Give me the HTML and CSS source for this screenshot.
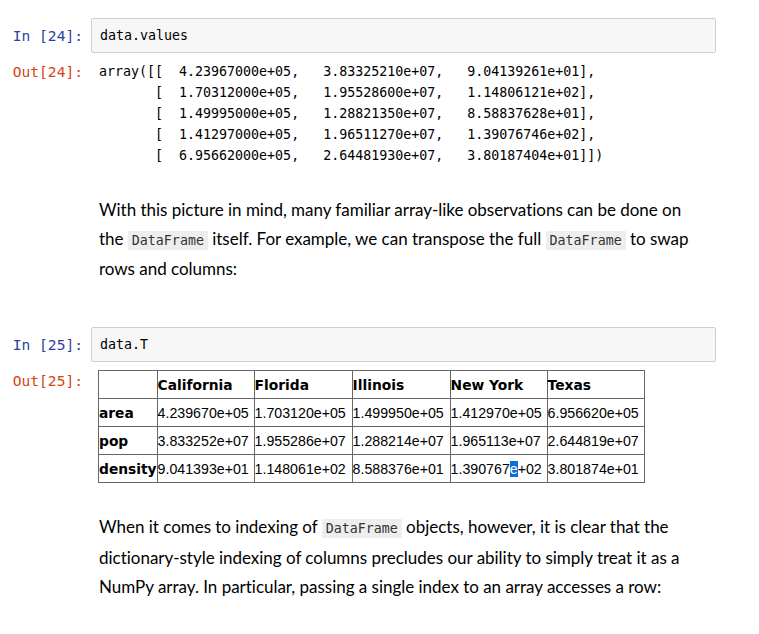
FILE: index.html
```html
<!DOCTYPE html>
<html>
<head>
<meta charset="utf-8">
<link rel="stylesheet" href="styles.css">
</head>
<body>
<div class="nb">
  <div class="cell cell-first">
    <div class="row">
      <div class="prompt prompt-in">In&nbsp;[24]:</div>
      <div class="input"><pre class="code">data.values</pre></div>
    </div>
    <div class="row row-out">
      <div class="prompt prompt-out">Out[24]:</div>
      <pre class="output">array([[  4.23967000e+05,   3.83325210e+07,   9.04139261e+01],
       [  1.70312000e+05,   1.95528600e+07,   1.14806121e+02],
       [  1.49995000e+05,   1.28821350e+07,   8.58837628e+01],
       [  1.41297000e+05,   1.96511270e+07,   1.39076746e+02],
       [  6.95662000e+05,   2.64481930e+07,   3.80187404e+01]])</pre>
    </div>
  </div>

  <div class="md md-first">
    <p>With this picture in mind, many familiar array-like observations can be done on the <code>DataFrame</code> itself. For example, we can transpose the full <code>DataFrame</code> to swap rows and columns:</p>
  </div>

  <div class="cell cell-second">
    <div class="row">
      <div class="prompt prompt-in">In&nbsp;[25]:</div>
      <div class="input"><pre class="code">data.T</pre></div>
    </div>
    <div class="row row-out2">
      <div class="prompt prompt-out">Out[25]:</div>
      <table class="df">
        <thead>
          <tr><th class="c0"></th><th class="c1">California</th><th class="c2">Florida</th><th class="c3">Illinois</th><th class="c4">New York</th><th class="c5">Texas</th></tr>
        </thead>
        <tbody>
          <tr><th>area</th><td>4.239670e+05</td><td>1.703120e+05</td><td>1.499950e+05</td><td>1.412970e+05</td><td>6.956620e+05</td></tr>
          <tr><th>pop</th><td>3.833252e+07</td><td>1.955286e+07</td><td>1.288214e+07</td><td>1.965113e+07</td><td>2.644819e+07</td></tr>
          <tr><th>density</th><td>9.041393e+01</td><td>1.148061e+02</td><td>8.588376e+01</td><td>1.390767<span class="sel">e</span>+02</td><td>3.801874e+01</td></tr>
        </tbody>
      </table>
    </div>
  </div>

  <div class="md md-second">
    <p>When it comes to indexing of <code>DataFrame</code> objects, however, it is clear that the dictionary-style indexing of columns precludes our ability to simply treat it as a NumPy array. In particular, passing a single index to an array accesses a row:</p>
  </div>
</div>
</body>
</html>
```

FILE: styles.css
```css
html, body {
  margin: 0;
  padding: 0;
  background: #ffffff;
}

.nb {
  width: 759px;
}

.row {
  display: flex;
  align-items: flex-start;
}

.cell-first {
  padding-top: 18px;
}

.cell-second {
  padding-top: 43px;
}

.prompt {
  width: 83px;
  padding-right: 8px;
  flex: none;
  text-align: right;
  font-family: "DejaVu Sans Mono", monospace;
  font-size: 14.6px;
  line-height: 21px;
  white-space: nowrap;
}

.prompt-in {
  color: #303f9f;
  padding-top: 7px;
}

.prompt-out {
  color: #d84315;
}

.input {
  width: 607px;
  height: 33px;
  border: 1px solid #cfcfcf;
  border-radius: 2px;
  background: #f7f7f7;
  padding: 0 8px;
  display: flex;
  align-items: center;
}

.code, .output {
  margin: 0;
  font-family: "DejaVu Sans Mono", monospace;
  font-size: 13.3px;
  color: #000;
}

.code {
  line-height: 21px;
}

.row-out {
  padding-top: 8px;
}

.output {
  line-height: 21px;
  padding-left: 8px;
}

.md {
  padding-left: 99px;
  width: 600px;
}

.md p {
  margin: 0;
  font-family: Lato, "Liberation Sans", sans-serif;
  font-size: 17px;
  line-height: 28.7px;
  color: #000;
  letter-spacing: -0.02px;
}

.md-first {
  padding-top: 30px;
}

.md-second {
  padding-top: 30px;
}

.md code {
  font-family: "DejaVu Sans Mono", monospace;
  font-size: 13.3px;
  letter-spacing: 0;
  background: #eeeeee;
  color: #333;
  padding: 2px 4px;
}

.row-out2 {
  padding-top: 8px;
}

.df {
  margin-left: 7px;
  border-collapse: collapse;
  font-family: "Liberation Sans", sans-serif;
  font-size: 14.2px;
  color: #000;
}

.df th, .df td {
  border: 1px solid #666;
  padding: 0;
  height: 27px;
  text-align: left;
  white-space: nowrap;
}

.df th {
  font-family: "DejaVu Sans", sans-serif;
  font-weight: bold;
  font-size: 13.8px;
}

.df .c0 { width: 56px; }
.df .c1 { width: 96px; }
.df .c2 { width: 97px; }
.df .c3 { width: 97px; }
.df .c4 { width: 96px; }
.df .c5 { width: 96px; }

.sel {
  background: #0a6fd8;
  color: #ffffff;
}
```
